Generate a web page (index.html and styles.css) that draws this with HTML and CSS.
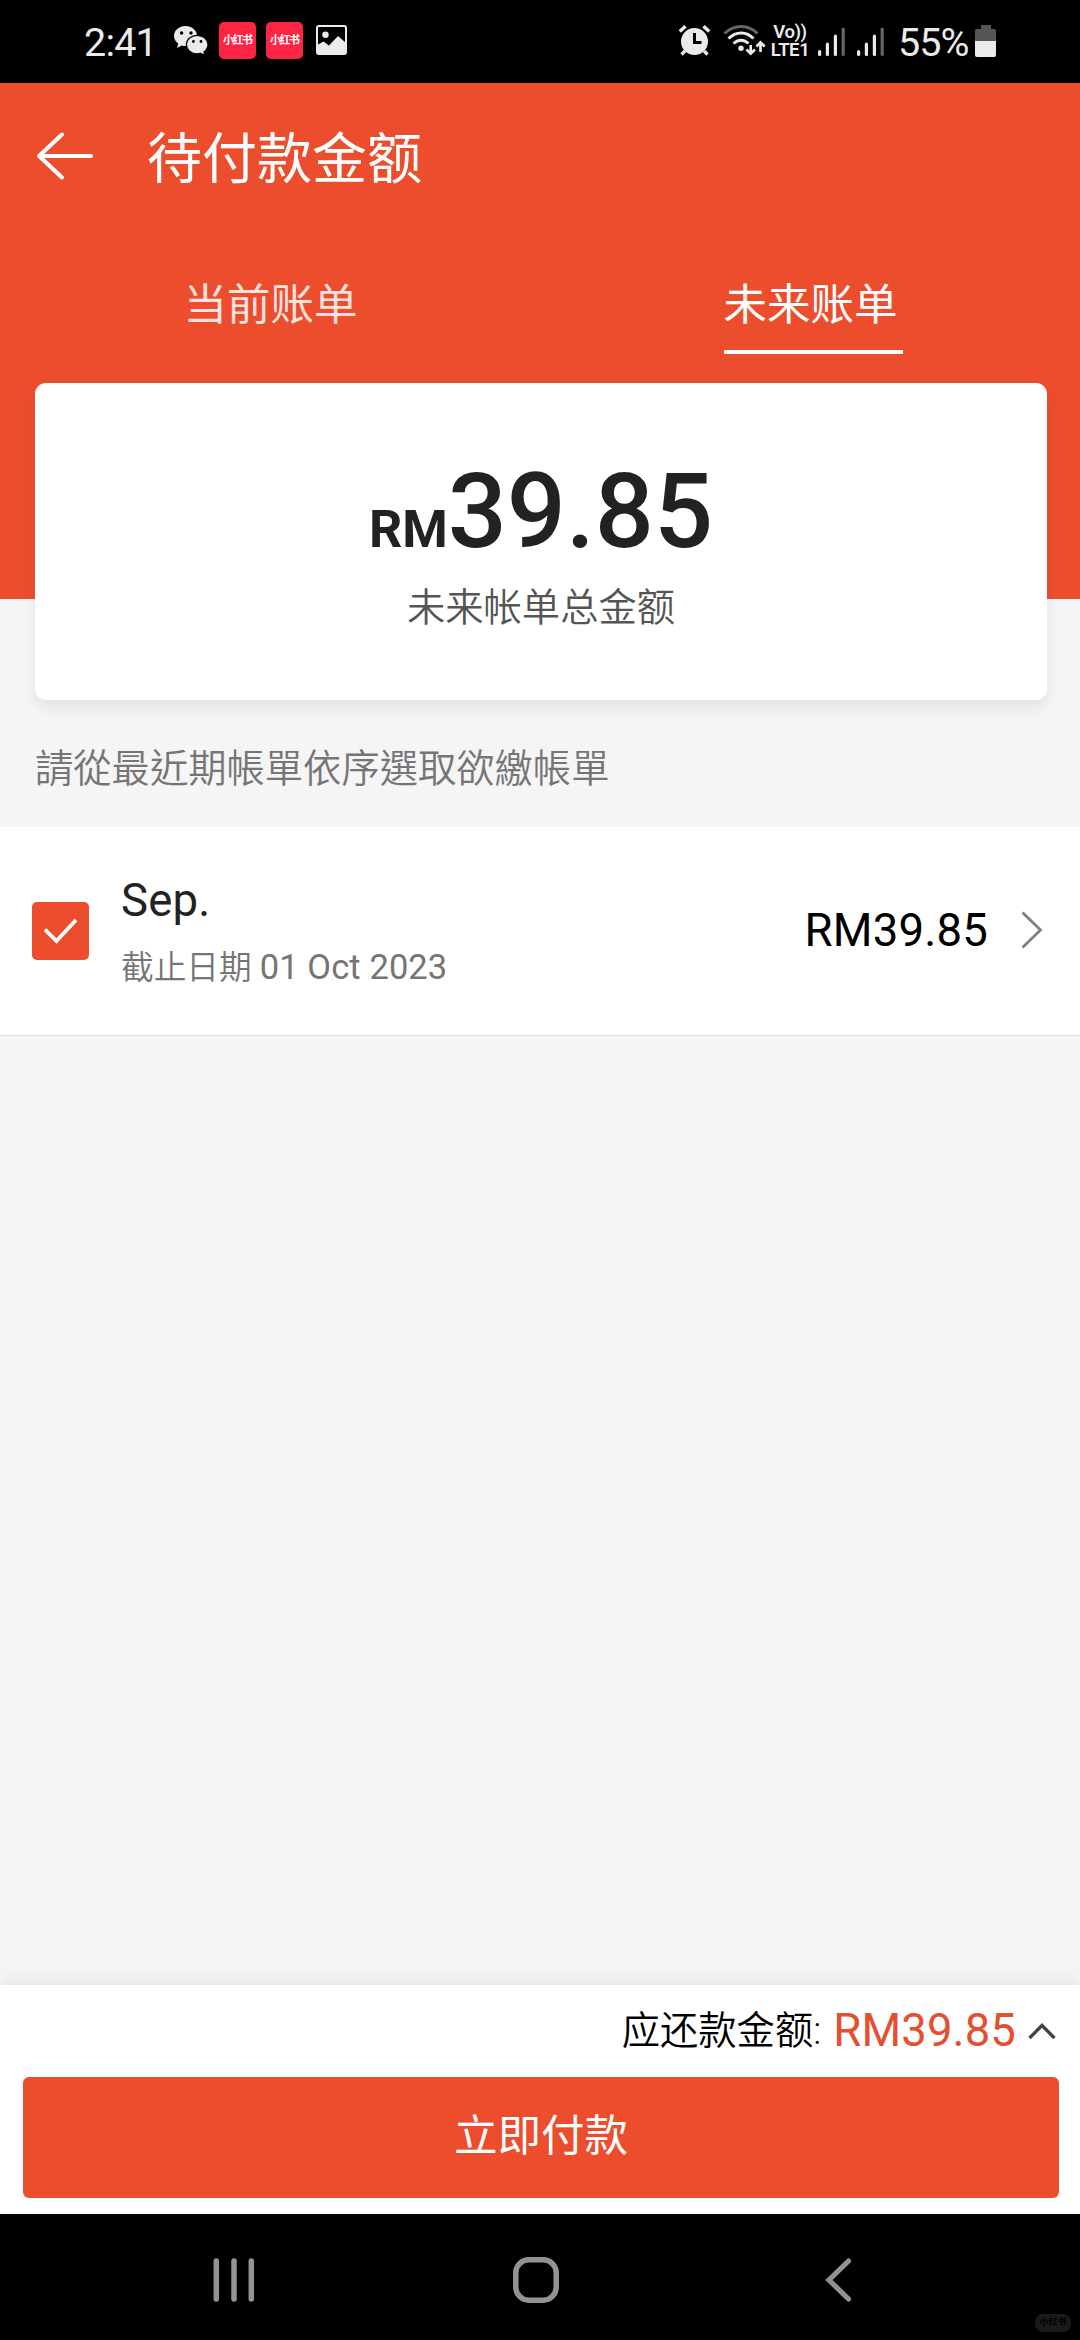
FILE: index.html
```html
<!DOCTYPE html>
<html lang="zh-CN">
<head>
<meta charset="utf-8">
<title>待付款金额</title>
<link rel="stylesheet" href="styles.css">
</head>
<body>
<div class="screen">
  <div class="status">
    <span class="clock">2:41</span>
    <svg class="wechat" width="36" height="32" viewBox="0 0 36 32">
      <path fill="#ebebeb" d="M12.6 1C6 1 1 5.400 1 11c0 3.200 1.700 5.800 4.200 7.600L4 23l4.700-2.600c1.200.4 2.500.6 3.900.6C19 21 24 16.500 24 11S19 1 12.600 1z"/>
      <path fill="#ebebeb" stroke="#000" stroke-width="1.200" d="M24.200 10.400c-6 0-10.800 4-10.800 9.200s4.800 9.300 10.800 9.300c1.200 0 2.400-.2 3.500-.5l4.200 2-1-3.500c2.500-1.700 4.100-4.300 4.100-7.300 0-5.200-4.800-9.200-10.800-9.200z"/>
      <g fill="#000"><circle cx="8.600" cy="8" r="1.700"/><circle cx="18" cy="8" r="1.700"/><circle cx="20.400" cy="16.500" r="1.400"/><circle cx="28" cy="16.500" r="1.400"/></g>
    </svg>
    <span class="xhs">小红书</span>
    <span class="xhs">小红书</span>
    <svg class="photo" width="31" height="30" viewBox="0 0 31 30">
      <rect x="1" y="1" width="29" height="28" rx="2" fill="none" stroke="#ebebeb" stroke-width="2"/>
      <circle cx="9.500" cy="9.800" r="3.200" fill="#ebebeb"/>
      <path fill="#ebebeb" d="M1 20l6.500-3.500 5.500 4 9-9.500 8 7v11H1z"/>
    </svg>
    <span class="spacer"></span>
    <svg class="alarm" width="33" height="32" viewBox="0 0 33 32">
      <circle cx="16.500" cy="17.500" r="13.500" fill="#ebebeb"/>
      <path d="M1.800 7.500L7.500 2.200M31.200 7.500L25.500 2.200M7 27l-3.500 3.500M26 27l3.500 3.500" stroke="#ebebeb" stroke-width="3.400" fill="none"/>
      <path d="M16.500 9v9.500h7" stroke="#000" stroke-width="3" fill="none"/>
    </svg>
    <svg class="wifi" width="43" height="32" viewBox="0 0 43 32" fill="none" stroke="#ebebeb" stroke-width="3">
      <path stroke="#666" d="M1.500 9.500c9.500-9.500 24-9.500 33 0"/>
      <path d="M5.500 14.500c7.500-7.500 18-7.500 25 0M10.500 19.500c4.500-4.500 10.500-4.500 15 0"/>
      <circle cx="18" cy="24.200" r="2.700" fill="#ebebeb" stroke="none"/>
      <path stroke-width="2.600" d="M27.700 21v8M23.500 25.500l4.200 4.200 4.200-4.200M37.500 28v-9M33.500 22.500l4-4.200 4.200 4.200"/>
    </svg>
    <span class="lte"><b>Vo))</b><b>LTE1</b></span>
    <svg class="sig" width="27" height="30" viewBox="0 0 27 30" stroke="#ebebeb" stroke-width="3.200" stroke-linecap="round"><path d="M1.600 24.500v3M9.400 17v10.500M17.400 9v18.500"/><path stroke="#666" d="M25.200 2v25.500"/></svg>
    <svg class="sig" width="27" height="30" viewBox="0 0 27 30" stroke="#ebebeb" stroke-width="3.200" stroke-linecap="round"><path d="M1.600 24.500v3M9.400 17v10.500M17.400 9v18.500"/><path stroke="#666" d="M25.200 2v25.500"/></svg>
    <span class="pct">55%</span>
    <svg class="batt" width="21" height="32" viewBox="0 0 21 32"><path fill="#555" d="M6 0h10v4h3a2 2 0 012 2v10H0V6a2 2 0 012-2h4z"/><path fill="#ebebeb" d="M0 16h21v14a2 2 0 01-2 2H2a2 2 0 01-2-2z"/></svg>
  </div>

  <div class="hero">
    <div class="titlebar">
      <svg width="58" height="50" viewBox="0 0 58 50" fill="none" stroke="#fff" stroke-width="4" stroke-linecap="round" stroke-linejoin="round"><path d="M55 25H3M26 3.500L3 25l23 21.500"/></svg>
      <h1>待付款金额</h1>
    </div>
    <div class="tabs">
      <div class="tab"><span>当前账单</span></div>
      <div class="tab on"><span>未来账单</span></div>
    </div>
  </div>
  <div class="card">
    <div class="total"><small>RM</small>39.85</div>
    <div class="caption">未来帐单总金额</div>
  </div>
  <p class="hint" lang="zh-TW">請從最近期帳單依序選取欲繳帳單</p>

  <div class="bill">
    <span class="check"><svg width="34" height="26" viewBox="0 0 34 26" fill="none" stroke="#fff" stroke-width="3.800"><path d="M1 11.500L12.500 23 32 2"/></svg></span>
    <div class="info">
      <div class="month">Sep.</div>
      <div class="due">截止日期 <span class="date">01 Oct 2023</span></div>
    </div>
    <span class="amount">RM39.85</span>
    <svg class="chev" width="22" height="38" viewBox="0 0 22 38" fill="none" stroke="#808080" stroke-width="2.800"><path d="M1.500 1.500L19.500 19 1.500 36.500"/></svg>
  </div>

  <div class="fill"></div>

  <div class="pay">
    <div class="sum">
      <span class="label">应还款金额:</span>
      <span class="due-amt">RM39.85</span>
      <svg width="28" height="18" viewBox="0 0 28 18" fill="none" stroke="#444" stroke-width="3.400"><path d="M1.500 16L14 3.500 26.500 16"/></svg>
    </div>
    <div class="btn">立即付款</div>
  </div>

  <div class="nav">
    <svg class="recents" width="42" height="44" viewBox="0 0 42 44" stroke="#929292" stroke-width="5.500" stroke-linecap="round"><path d="M3.300 3v38M21 3v38M38.300 3v38"/></svg>
    <svg class="home" width="46" height="46" viewBox="0 0 46 46"><rect x="2.800" y="2.800" width="40.400" height="40.400" rx="13" fill="none" stroke="#929292" stroke-width="5.500"/></svg>
    <svg class="back" width="27" height="44" viewBox="0 0 27 44" fill="none" stroke="#929292" stroke-width="5.200" stroke-linecap="round"><path d="M23.500 3L4 22l19.500 19"/></svg>
    <span class="mark">小红书</span>
  </div>
</div>
</body>
</html>
```
FILE: styles.css
```css
* { box-sizing: border-box; }
body { margin: 0; background: #f5f5f5; font-family: Roboto, "Noto Sans CJK SC", sans-serif; }
svg { display: block; flex: none; }
.screen { width: 1080px; height: 2340px; display: flex; flex-direction: column; background: #f5f5f5; }

.status { height: 83px; flex: none; background: #000; color: #ebebeb; display: flex; align-items: flex-start; padding: 0 84px 0 84px; }
.clock, .pct { font-size: 39.5px; line-height: 40px; margin-top: 23px; white-space: nowrap; }
.clock { width: 89px; letter-spacing: -.8px; }
.wechat { margin-top: 25px; }
.xhs { width: 37px; height: 37px; margin: 22px 0 0 10px; border-radius: 5px; background: #ff2442; color: #fff; font-size: 11px; font-weight: 700; line-height: 37px; letter-spacing: -1.5px; padding-left: 4px; white-space: nowrap; }
.photo { margin: 25px 0 0 13px; }
.spacer { flex: 1; }
.alarm { margin-top: 24px; }
.wifi { margin: 24px 0 0 12px; }
.lte { width: 38px; margin: 23px 0 0 5px; display: flex; flex-direction: column; align-items: center; font-size: 18.500px; line-height: 18px; letter-spacing: -.4px; }
.lte b { font-weight: 600; white-space: nowrap; }
.sig { margin: 27px 0 0 9px; }
.sig + .sig { margin-left: 12px; }
.pct { width: 76px; margin-left: 14px; letter-spacing: -1px; }
.batt { margin: 25px 0 0 1px; }

.hero { height: 516px; flex: none; background: #ec4e2d; color: #fff; }
.titlebar { display: flex; align-items: center; height: 146px; padding-left: 36px; }
.titlebar h1 { margin: 5px 0 0 53px; font-size: 55px; line-height: 60px; font-weight: 400; }
.tabs { display: flex; padding-left: 3px; height: 125px; }
.tab { flex: none; width: 540px; display: flex; justify-content: center; color: rgba(255,255,255,.85); }
.tab span { width: 179px; height: 92px; margin-top: 33px; font-size: 43.500px; line-height: 87px; border-bottom: 4px solid transparent; white-space: nowrap; }
.tab.on { color: #fff; }
.on span { border-color: #fff; }

.card { flex: none; width: 1012px; height: 317px; margin: -216px 0 0 35px; padding-top: 70px; border-radius: 11px; background: #fff; box-shadow: 0 8px 14px rgba(0,0,0,.07); text-align: center; color: #222; }
.total { font-size: 104px; line-height: 118px; font-weight: 500; }
.total small { font-size: 52px; font-weight: 700; }
.caption { margin-top: -14px; font-size: 38.300px; line-height: 60px; font-family: "Noto Sans CJK SC", sans-serif; font-weight: 350; color: #555; }
.hint { margin: 0; height: 127px; padding: 36px 35px 0; font-family: "Noto Sans CJK TC", sans-serif; font-size: 38.300px; line-height: 60px; font-weight: 350; color: #757575; }

.bill { flex: none; height: 209px; background: #fff; border-bottom: 1px solid #e0e0e0; display: flex; align-items: center; padding: 0 37px 0 32px; }
.check { width: 57px; height: 58px; border-radius: 5px; background: #ec4e2d; display: flex; align-items: center; justify-content: center; }
.info { flex: 1; margin-left: 32px; }
.month { font-size: 45.500px; line-height: 60px; letter-spacing: .2px; color: #222; }
.due { margin-top: 12px; font-size: 32.700px; line-height: 48px; font-weight: 350; color: #757575; }
.date { font-size: 34.500px; font-weight: 400; letter-spacing: .1px; }
.amount { font-size: 45.500px; line-height: 60px; letter-spacing: .2px; color: #000; }
.chev { margin: -2px 0 0 33px; }

.fill { flex: 1; }
.pay { flex: none; height: 229px; background: #fff; box-shadow: 0 -4px 16px rgba(0,0,0,.07); }
.sum { display: flex; align-items: center; justify-content: flex-end; height: 91px; margin-bottom: 1px; padding-right: 24px; }
.label { font-size: 38.300px; line-height: 60px; font-weight: 350; color: #000; }
.due-amt { margin: 0 12px 0 12px; font-size: 45.500px; line-height: 60px; letter-spacing: .1px; color: #e4502f; }
.btn { width: 1036px; height: 121px; margin-left: 23px; border-radius: 6px; background: #ec4e2d; color: #fff; font-size: 43.500px; line-height: 119px; text-align: center; }

.nav { flex: none; height: 126px; background: #000; display: flex; align-items: flex-start; padding-left: 213px; }
.recents { margin-top: 44px; }
.home { margin: 43px 0 0 258px; }
.back { margin: 44px 0 0 266px; }
.mark { width: 36px; height: 18px; margin: 100px 0 0 183px; border-radius: 8px; background: #1a1a1a; color: #000; font-size: 9px; font-weight: 700; line-height: 17px; text-align: center; white-space: nowrap; }
```
